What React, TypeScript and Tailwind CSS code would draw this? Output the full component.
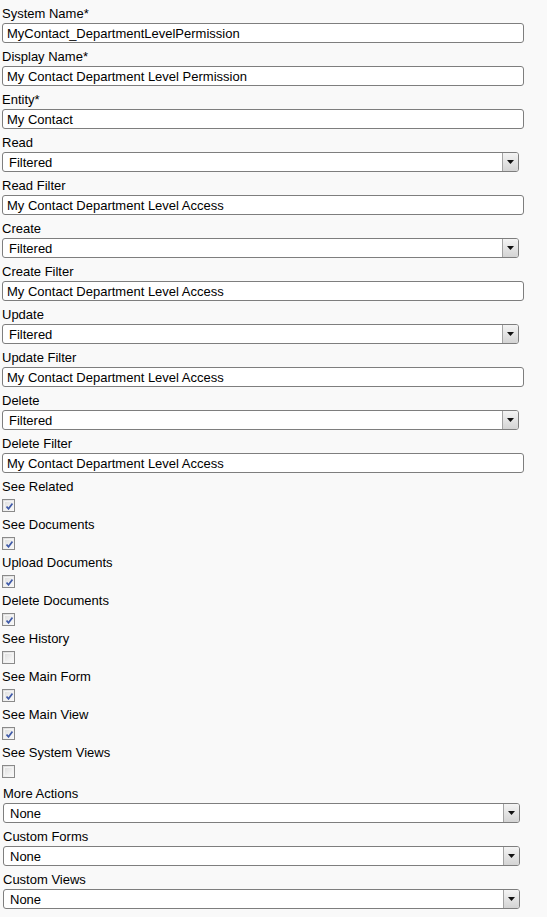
const FONT = "font-['Liberation_Sans',Arial,sans-serif]";

type Field =
  | { kind: 'text'; label: string; value: string }
  | { kind: 'select'; label: string; value: string }
  | { kind: 'check'; label: string; checked: boolean };

const fields: Field[] = [
  { kind: 'text', label: 'System Name*', value: 'MyContact_DepartmentLevelPermission' },
  { kind: 'text', label: 'Display Name*', value: 'My Contact Department Level Permission' },
  { kind: 'text', label: 'Entity*', value: 'My Contact' },
  { kind: 'select', label: 'Read', value: 'Filtered' },
  { kind: 'text', label: 'Read Filter', value: 'My Contact Department Level Access' },
  { kind: 'select', label: 'Create', value: 'Filtered' },
  { kind: 'text', label: 'Create Filter', value: 'My Contact Department Level Access' },
  { kind: 'select', label: 'Update', value: 'Filtered' },
  { kind: 'text', label: 'Update Filter', value: 'My Contact Department Level Access' },
  { kind: 'select', label: 'Delete', value: 'Filtered' },
  { kind: 'text', label: 'Delete Filter', value: 'My Contact Department Level Access' },
  { kind: 'check', label: 'See Related', checked: true },
  { kind: 'check', label: 'See Documents', checked: true },
  { kind: 'check', label: 'Upload Documents', checked: true },
  { kind: 'check', label: 'Delete Documents', checked: true },
  { kind: 'check', label: 'See History', checked: false },
  { kind: 'check', label: 'See Main Form', checked: true },
  { kind: 'check', label: 'See Main View', checked: true },
  { kind: 'check', label: 'See System Views', checked: false },
];

const extras = ['More Actions', 'Custom Forms', 'Custom Views'];

const Label = ({ children }: { children: string }) => (
  <div className="h-[19px] leading-[19px] text-[13px] text-black whitespace-nowrap">{children}</div>
);

const TextBox = ({ value }: { value: string }) => (
  <div className="w-[522px] h-[20px] rounded-[3px] border border-[#7e7e7e] bg-white pl-[4px] text-[13px] leading-[20px] text-black whitespace-nowrap overflow-hidden">
    {value}
  </div>
);

const SelectBox = ({ value }: { value: string }) => (
  <div className="flex w-[517px] h-[20px] rounded-[3px] border border-[#7e7e7e] bg-white text-[13px] text-black">
    <div className="flex-1 pl-[6px] leading-[20px] whitespace-nowrap overflow-hidden">{value}</div>
    <div className="flex w-[16px] items-center justify-center rounded-r-[2px] border-l border-[#a3a3a3] bg-gradient-to-b from-[#f4f4f4] to-[#d4d4d4]">
      <svg width="7" height="4" viewBox="0 0 7 4">
        <path d="M0 0h7L3.5 4z" fill="#111" />
      </svg>
    </div>
  </div>
);

const CheckBox = ({ checked }: { checked: boolean }) => (
  <div className="my-[3px] h-[13px] w-[13px] border border-[#8a8a8a] bg-gradient-to-br from-[#dcdcdc] to-[#fbfbfb] p-[1px]">
    <div className="relative h-full w-full border border-[#f4f4f4] bg-gradient-to-br from-[#e0e0e0] to-[#f8f8f8]">
      {checked && (
        <svg className="absolute left-[1px] top-[1px]" width="7" height="7" viewBox="0 0 7 7">
          <path d="M0.5 3.5 L2.5 5.8 L6.5 0.5" stroke="#3f5aa8" strokeWidth="1.7" fill="none" />
        </svg>
      )}
    </div>
  </div>
);

export default function App() {
  return (
    <div className={`${FONT} min-h-[917px] w-[547px] bg-[#f9f9f9] px-[2px] pt-[4px]`}>
      {fields.map((f) => (
        <div key={f.label} className={f.kind === 'check' ? '' : 'mb-[4px]'}>
          <Label>{f.label}</Label>
          {f.kind === 'text' && <TextBox value={f.value} />}
          {f.kind === 'select' && <SelectBox value={f.value} />}
          {f.kind === 'check' && <CheckBox checked={f.checked} />}
        </div>
      ))}
      <div className="mt-[6px] pl-[1px]">
        {extras.map((label) => (
          <div key={label} className="mb-[4px]">
            <Label>{label}</Label>
            <SelectBox value="None" />
          </div>
        ))}
      </div>
    </div>
  );
}
